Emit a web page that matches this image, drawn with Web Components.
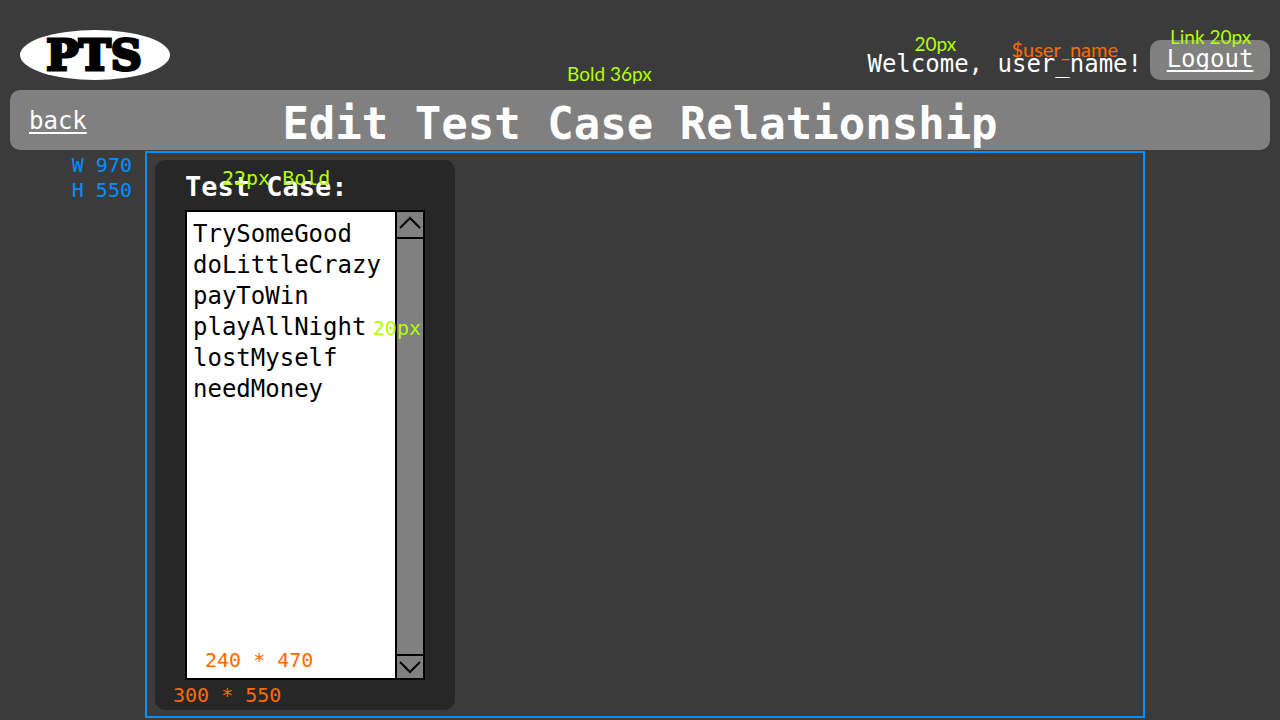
<!DOCTYPE html>
<html lang="en">
<head>
<meta charset="utf-8">
<title>Edit Test Case Relationship</title>
<style>
  html { background: #3b3b3b; }
  body { margin: 0; font: 24px/32px "DejaVu Sans Mono", monospace; color: #fff; }
</style>
</head>
<body>
<pts-app></pts-app>
<script>
const define = (name, html, setup) => {
  const template = document.createElement('template');
  template.innerHTML = html;
  customElements.define(name, class extends HTMLElement {
    constructor() {
      super();
      this.attachShadow({ mode: 'open' }).append(template.content.cloneNode(true));
      if (setup) setup(this.shadowRoot);
    }
  });
};

// Design annotation laid over the element it describes.
define('design-note', `
  <style>
    :host { position: absolute; z-index: 2; font-size: 20px; line-height: 24px; color: #b2ff00; white-space: nowrap; pointer-events: none; }
    :host([sans]) { font-family: Lato, sans-serif; font-size: 19px; }
    :host([tone="size"]) { color: #ff6a00; }
    :host([sans][tone="size"]) { font-size: 20px; }
  </style>
  <slot></slot>`);

define('pts-logo', `
  <style>
    :host { display: flex; align-items: center; justify-content: center; width: 150px; height: 50px; border-radius: 50%; background: #fff; }
    span { padding-right: 2px; color: #000; font: bold 43px/50px "DejaVu Serif", serif; -webkit-text-stroke: 3px #000; }
  </style>
  <span>PTS</span>`);

define('text-link', `
  <style>
    a { color: inherit; text-decoration: underline 2px; text-underline-offset: 3px; text-decoration-skip-ink: none; }
  </style>
  <a href="#"><slot></slot></a>`);

define('top-bar', `
  <style>
    :host { display: flex; align-items: flex-end; justify-content: space-between; box-sizing: border-box; height: 90px; padding: 0 10px 10px; }
    pts-logo { margin-left: 10px; }
    .account { display: flex; gap: 8px; }
    .welcome, .logout { position: relative; height: 40px; }
    .welcome { line-height: 48px; }
    .logout { width: 120px; border-radius: 10px; background: #808080; text-align: center; line-height: 38px; }
  </style>
  <pts-logo></pts-logo>
  <div class="account">
    <div class="welcome">Welcome, user_name!
      <design-note sans style="left:47px;top:-8px">20px</design-note>
      <design-note sans tone="size" style="right:24px;top:-3px">$user_name</design-note>
    </div>
    <div class="logout"><text-link>Logout</text-link>
      <design-note sans style="left:20px;top:-15px">Link 20px</design-note>
    </div>
  </div>`);

define('title-bar', `
  <style>
    :host { position: relative; display: grid; grid-template-columns: 1fr auto 1fr; align-items: center; height: 60px; margin: 0 10px; border-radius: 10px; background: #808080; }
    text-link { padding: 0 0 2px 19px; }
    h1 { margin: 0; font-size: 44px; line-height: 60px; padding-top: 4px; }
    design-note { left: 557px; top: -28px; }
  </style>
  <text-link>back</text-link>
  <h1>Edit Test Case Relationship</h1>
  <design-note sans>Bold 36px</design-note>`);

define('case-list', `
  <style>
    :host { position: relative; display: grid; grid-template-columns: minmax(0, 1fr) 28px; box-sizing: border-box; height: 470px; border: 2px solid #000; background: #fff; }
    select { appearance: none; display: block; box-sizing: border-box; width: 100%; height: 100%; margin: 0; padding: 8px 6px; border: 0; border-radius: 0; outline: 0; background: #fff; color: #000; font: inherit; overflow-y: auto; scrollbar-width: none; }
    option { padding: 0; height: 31px; line-height: 31px; color: #000; }
    .scroll { display: grid; grid-template-rows: 27px 1fr 24px; border-left: 2px solid #000; background: #808080; }
    button { display: grid; place-items: center; padding: 0; border: 0 solid #000; background: #808080; }
    .up { border-bottom-width: 2px; padding-bottom: 3px; }
    .down { border-top-width: 2px; }
    svg { display: block; fill: none; stroke: #000; stroke-width: 2; }
  </style>
  <select size="6" aria-label="Test Case">
    <option>TrySomeGood</option>
    <option>doLittleCrazy</option>
    <option>payToWin</option>
    <option>playAllNight</option>
    <option>lostMyself</option>
    <option>needMoney</option>
  </select>
  <div class="scroll">
    <button class="up" type="button" aria-label="Scroll up"><svg width="22" height="14" viewBox="0 0 22 14"><path d="M1 12 L11 2 L21 12"/></svg></button>
    <span></span>
    <button class="down" type="button" aria-label="Scroll down"><svg width="22" height="14" viewBox="0 0 22 14"><path d="M1 2 L11 12 L21 2"/></svg></button>
  </div>
  <design-note style="right:2px;top:104px">20px</design-note>
  <design-note tone="size" style="left:18px;bottom:6px">240 * 470</design-note>`,
  root => {
    const list = root.querySelector('select');
    root.querySelector('.up').addEventListener('click', () => list.scrollBy(0, -31));
    root.querySelector('.down').addEventListener('click', () => list.scrollBy(0, 31));
  });

define('case-panel', `
  <style>
    :host { position: relative; display: block; box-sizing: border-box; width: 300px; height: 550px; padding: 0 30px; border-radius: 10px; background: #272727; }
    h2 { margin: 0; font-size: 27px; line-height: 50px; padding-top: 2px; height: 48px; white-space: nowrap; }
  </style>
  <h2>Test Case:</h2>
  <case-list></case-list>
  <design-note style="left:67px;top:6px">22px Bold</design-note>
  <design-note tone="size" style="left:18px;bottom:3px">300 * 550</design-note>`);

define('work-area', `
  <style>
    :host { display: grid; grid-template-columns: minmax(max-content, 1fr) minmax(0, 1000px) 1fr; margin-top: 1px; padding-left: 10px; }
    .size { padding: 2px 13px 0 0; text-align: right; font-size: 20px; line-height: 25px; color: #0090ff; }
    .stage { border: 2px solid #0090ff; padding: 7px 8px 6px; }
  </style>
  <div class="size">W 970<br>H 550</div>
  <div class="stage"><case-panel></case-panel></div>`);

define('pts-app', `
  <style>:host { display: block; }</style>
  <top-bar></top-bar>
  <title-bar></title-bar>
  <work-area></work-area>`);
</script>
</body>
</html>
